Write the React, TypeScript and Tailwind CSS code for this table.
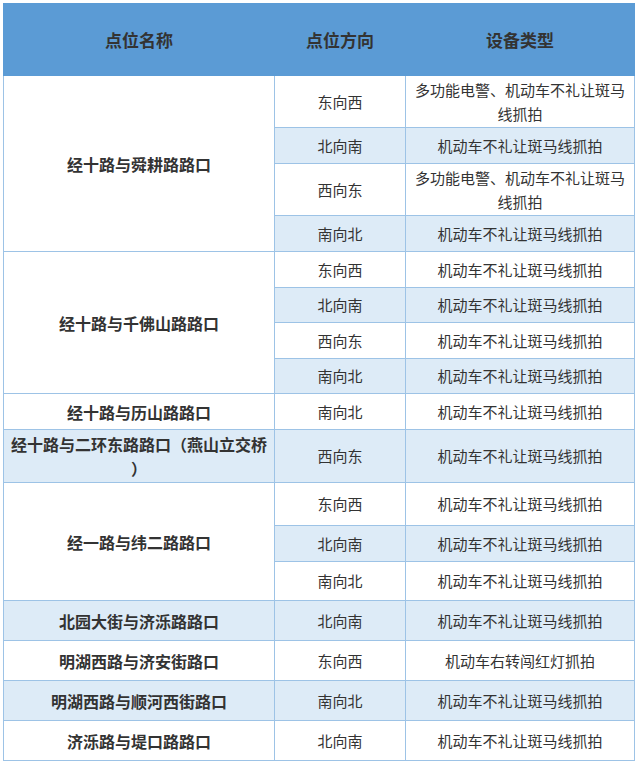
import React from 'react';

type Row = {
  name?: string;
  span?: number;
  dir: string;
  type: React.ReactNode;
  h: number;
};

const MULTI = '多功能电警、机动车不礼让斑马线抓拍';
const ZEBRA = '机动车不礼让斑马线抓拍';

const rows: Row[] = [
  { name: '经十路与舜耕路路口', span: 4, dir: '东向西', type: MULTI, h: 52 },
  { dir: '北向南', type: ZEBRA, h: 36 },
  { dir: '西向东', type: MULTI, h: 52 },
  { dir: '南向北', type: ZEBRA, h: 36 },
  { name: '经十路与千佛山路路口', span: 4, dir: '东向西', type: ZEBRA, h: 36 },
  { dir: '北向南', type: ZEBRA, h: 35 },
  { dir: '西向东', type: ZEBRA, h: 36 },
  { dir: '南向北', type: ZEBRA, h: 35 },
  { name: '经十路与历山路路口', span: 1, dir: '南向北', type: ZEBRA, h: 36 },
  { name: '__erhuan', span: 1, dir: '西向东', type: ZEBRA, h: 53 },
  { name: '经一路与纬二路路口', span: 3, dir: '东向西', type: ZEBRA, h: 43 },
  { dir: '北向南', type: ZEBRA, h: 36 },
  { dir: '南向北', type: ZEBRA, h: 39 },
  { name: '北园大街与济泺路路口', span: 1, dir: '北向南', type: ZEBRA, h: 40 },
  { name: '明湖西路与济安街路口', span: 1, dir: '东向西', type: '机动车右转闯红灯抓拍', h: 40 },
  { name: '明湖西路与顺河西街路口', span: 1, dir: '南向北', type: ZEBRA, h: 40 },
  { name: '济泺路与堤口路路口', span: 1, dir: '北向南', type: ZEBRA, h: 40 },
];

const cell = 'border border-[#9dc3e6] p-0 text-center align-middle leading-[24px]';

export default function App() {
  return (
    <div className="bg-white p-[3px] font-['Noto_Sans_CJK_SC','Noto_Sans',sans-serif] text-[#333]">
      <table className="w-[631px] table-fixed border-collapse">
        <colgroup>
          <col className="w-[271px]" />
          <col className="w-[131px]" />
          <col className="w-[229px]" />
        </colgroup>
        <thead>
          <tr className="h-[72px] bg-[#5b9bd5]">
            <th className="border border-[#5b9bd5] text-[17px] font-bold">点位名称</th>
            <th className="border border-[#5b9bd5] text-[17px] font-bold">点位方向</th>
            <th className="border border-[#5b9bd5] text-[17px] font-bold">设备类型</th>
          </tr>
        </thead>
        <tbody>
          {rows.map((r, i) => (
            <tr key={i} className="even:bg-[#ddebf7]" style={{ height: r.h }}>
              {r.name && (
                <td rowSpan={r.span} className={`${cell} px-1 text-[16px] font-bold`}>
                  {r.name === '__erhuan' ? (
                    <>
                      经十路与二环东路路口（燕山立交桥
                      <br />）
                    </>
                  ) : (
                    r.name
                  )}
                </td>
              )}
              <td className={`${cell} text-[15px]`}>{r.dir}</td>
              <td className={`${cell} px-2 text-[15px]`}>{r.type}</td>
            </tr>
          ))}
        </tbody>
      </table>
    </div>
  );
}
